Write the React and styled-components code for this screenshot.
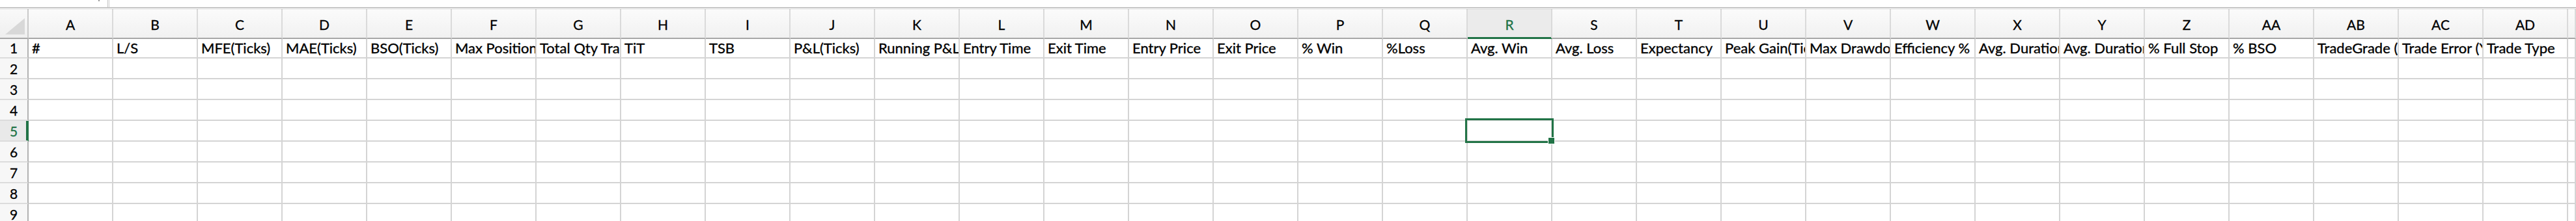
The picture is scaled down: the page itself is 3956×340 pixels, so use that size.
import styled, { createGlobalStyle, css } from "styled-components";

const GlobalStyle = createGlobalStyle`
  html, body {
    margin: 0;
    padding: 0;
    background: #ffffff;
    overflow: hidden;
  }
  body {
    font-family: "Lato", "Liberation Sans", sans-serif;
  }
`;

const GREEN = "#217346";

const headers = [
  "#", "L/S", "MFE(Ticks)", "MAE(Ticks)", "BSO(Ticks)", "Max Position",
  "Total Qty Traded", "TiT", "TSB", "P&L(Ticks)", "Running P&L", "Entry Time",
  "Exit Time", "Entry Price", "Exit Price", "% Win", "%Loss", "Avg. Win",
  "Avg. Loss", "Expectancy", "Peak Gain(Ticks)", "Max Drawdown(Ticks)",
  "Efficiency %", "Avg. Duration Win", "Avg. Duration Loss", "% Full Stop",
  "% BSO", "TradeGrade (A-F)", "Trade Error (Y/N)", "Trade Type",
];

const colName = (i) =>
  i < 26 ? String.fromCharCode(65 + i) : "A" + String.fromCharCode(39 + i);

const ROWS = 9;
const SEL_ROW = 5;
const SEL_COL = 17; // R

export default function App() {
  return (
    <>
      <GlobalStyle />
      <Window>
        <FormulaStrip>
          <NameBox>
            <DropTick />
          </NameBox>
          <FormulaField />
        </FormulaStrip>
        <Sheet>
          <Corner>
            <svg width="44" height="44" viewBox="0 0 44 44">
              <polygon points="8,39 38,39 38,14" fill="#d8d8d8" />
            </svg>
          </Corner>
          {headers.map((_, i) => (
            <ColHeader key={i} $active={i === SEL_COL}>
              {colName(i)}
            </ColHeader>
          ))}
          <ColHeader />

          {Array.from({ length: ROWS }, (_, r) => {
            const row = r + 1;
            return [
              <RowHeader key={`h${row}`} $first={row === 1} $active={row === SEL_ROW}>
                {row}
              </RowHeader>,
              ...headers.map((text, c) => (
                <Cell key={`${row}-${c}`} $first={row === 1}>
                  {row === 1 && <CellText>{text}</CellText>}
                  {row === SEL_ROW && c === SEL_COL && (
                    <Selection>
                      <FillHandle />
                    </Selection>
                  )}
                </Cell>
              )),
              <Cell key={`${row}-tail`} $first={row === 1} />,
            ];
          })}
        </Sheet>
      </Window>
    </>
  );
}

const Window = styled.div`
  width: 3956px;
  height: 340px;
  overflow: hidden;
  background: #ffffff;
`;

const FormulaStrip = styled.div`
  display: flex;
  height: 14px;
  box-sizing: border-box;
  background: linear-gradient(
    to bottom,
    #ffffff 0 11px,
    #a9a9a9 11px 12px,
    #ffffff 12px 13px,
    #cdcdcd 13px 14px
  );
`;

const NameBox = styled.div`
  position: relative;
  width: 166px;
  height: 11px;
  box-sizing: border-box;
  border-right: 1px solid #c4c4c4;
`;

const DropTick = styled.span`
  position: absolute;
  left: 151px;
  top: 0;
  width: 2px;
  height: 2px;
  background: #9a9a9a;
`;

const FormulaField = styled.div`
  flex: 1;
  height: 11px;
  margin-left: 1px;
  border-left: 1px solid #d0d0d0;
`;

const Sheet = styled.div`
  display: grid;
  grid-template-columns: 44px repeat(30, 130px) 1fr;
  grid-template-rows: 46px 30px repeat(8, 32px);
`;

const Corner = styled.div`
  box-sizing: border-box;
  background: linear-gradient(to bottom, #f9f9f9, #efefef);
  border-right: 2px solid #c9c9c9;
  border-bottom: 2px solid #a7a7a7;
  overflow: hidden;

  svg {
    display: block;
  }
`;

const ColHeader = styled.div`
  box-sizing: border-box;
  padding-top: 11px;
  text-align: center;
  font-size: 21px;
  color: #000000;
  -webkit-text-stroke: 0.3px #000000;
  background: linear-gradient(to bottom, #fbfbfb, #f1f1f1);
  border-right: 2px solid #dadada;
  border-bottom: 2px solid #a7a7a7;

  ${({ $active }) =>
    $active &&
    css`
      color: ${GREEN};
      -webkit-text-stroke: 0.3px ${GREEN};
      background: #ebebeb;
      border-bottom-color: ${GREEN};
      box-shadow: inset 0 -1px 0 ${GREEN};
    `}
`;

const RowHeader = styled.div`
  box-sizing: border-box;
  text-align: center;
  font-size: 21px;
  line-height: 30px;
  padding-top: 1px;
  color: #000000;
  -webkit-text-stroke: 0.3px #000000;
  background: #f7f7f7;
  border-right: 2px solid #b2b2b2;
  border-bottom: 2px solid #dcdcdc;

  ${({ $first }) =>
    $first &&
    css`
      line-height: 28px;
      padding-top: 0;
    `}

  ${({ $active }) =>
    $active &&
    css`
      color: ${GREEN};
      -webkit-text-stroke: 0.3px ${GREEN};
      background: #e9e9e9;
      border-right-color: ${GREEN};
      box-shadow: inset -2px 0 0 ${GREEN};
    `}
`;

const Cell = styled.div`
  position: relative;
  box-sizing: border-box;
  min-width: 0;
  border-right: 2px solid #d4d4d4;
  border-bottom: 2px solid #d4d4d4;
  background: #ffffff;
`;

const CellText = styled.div`
  padding-left: 5px;
  font-size: 22px;
  line-height: 28px;
  color: #000000;
  -webkit-text-stroke: 0.35px #000000;
  white-space: nowrap;
  overflow: hidden;
`;

const Selection = styled.div`
  position: absolute;
  left: -4px;
  top: -4px;
  right: -4px;
  bottom: -4px;
  border: 3px solid ${GREEN};
  z-index: 2;
`;

const FillHandle = styled.span`
  position: absolute;
  right: -5px;
  bottom: -5px;
  width: 9px;
  height: 9px;
  background: ${GREEN};
  border: 1px solid #ffffff;
`;
